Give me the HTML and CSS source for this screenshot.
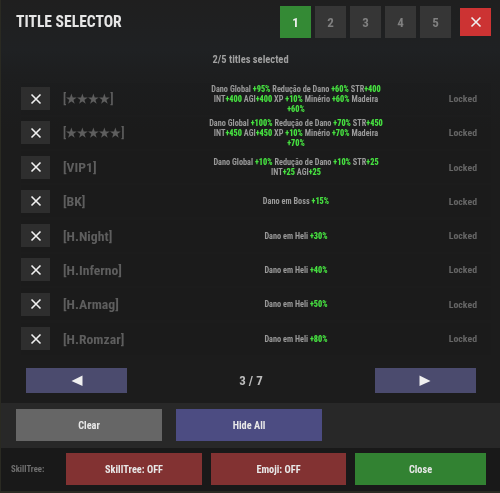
FILE: index.html
```html
<!DOCTYPE html>
<html lang="pt">
  <head>
    <meta charset="UTF-8" />
    <title>Title Selector</title>
    <link rel="stylesheet" href="styles.css">
  </head>
  <body>
    <div class="panel">
      <header class="top">
        <h1>TITLE SELECTOR</h1>
        <nav class="tabs">
          <span class="tab active">1</span>
          <span class="tab">2</span>
          <span class="tab">3</span>
          <span class="tab">4</span>
          <span class="tab">5</span>
        </nav>
        <span class="close-x">
          <svg viewBox="0 0 12 12" width="12" height="12"><path d="M1.5 1.5 10.5 10.5M10.5 1.5 1.5 10.5" /></svg>
        </span>
      </header>

      <p class="count">2/5 titles selected</p>

      <section class="rows">
        <div class="row">
          <span class="check"><svg viewBox="0 0 12 12" width="12" height="12"><path d="M1.5 1.5 10.5 10.5M10.5 1.5 1.5 10.5" /></svg></span>
          <span class="name stars">[★★★★]</span>
          <p class="bonus">Dano Global <b>+95%</b> Redução de Dano <b>+60%</b> STR<b>+400</b> INT<b>+400</b> AGI<b>+400</b> XP <b>+10%</b> Minério <b>+60%</b> Madeira <b>+60%</b></p>
          <span class="state">Locked</span>
        </div>
        <div class="row">
          <span class="check"><svg viewBox="0 0 12 12" width="12" height="12"><path d="M1.5 1.5 10.5 10.5M10.5 1.5 1.5 10.5" /></svg></span>
          <span class="name stars">[★★★★★]</span>
          <p class="bonus">Dano Global <b>+100%</b> Redução de Dano <b>+70%</b> STR<b>+450</b> INT<b>+450</b> AGI<b>+450</b> XP <b>+10%</b> Minério <b>+70%</b> Madeira <b>+70%</b></p>
          <span class="state">Locked</span>
        </div>
        <div class="row">
          <span class="check"><svg viewBox="0 0 12 12" width="12" height="12"><path d="M1.5 1.5 10.5 10.5M10.5 1.5 1.5 10.5" /></svg></span>
          <span class="name">[VIP1]</span>
          <p class="bonus">Dano Global <b>+10%</b> Redução de Dano <b>+10%</b> STR<b>+25</b> INT<b>+25</b> AGI<b>+25</b></p>
          <span class="state">Locked</span>
        </div>
        <div class="row">
          <span class="check"><svg viewBox="0 0 12 12" width="12" height="12"><path d="M1.5 1.5 10.5 10.5M10.5 1.5 1.5 10.5" /></svg></span>
          <span class="name">[BK]</span>
          <p class="bonus">Dano em Boss <b>+15%</b></p>
          <span class="state">Locked</span>
        </div>
        <div class="row">
          <span class="check"><svg viewBox="0 0 12 12" width="12" height="12"><path d="M1.5 1.5 10.5 10.5M10.5 1.5 1.5 10.5" /></svg></span>
          <span class="name">[H.Night]</span>
          <p class="bonus">Dano em Heli <b>+30%</b></p>
          <span class="state">Locked</span>
        </div>
        <div class="row">
          <span class="check"><svg viewBox="0 0 12 12" width="12" height="12"><path d="M1.5 1.5 10.5 10.5M10.5 1.5 1.5 10.5" /></svg></span>
          <span class="name">[H.Inferno]</span>
          <p class="bonus">Dano em Heli <b>+40%</b></p>
          <span class="state">Locked</span>
        </div>
        <div class="row">
          <span class="check"><svg viewBox="0 0 12 12" width="12" height="12"><path d="M1.5 1.5 10.5 10.5M10.5 1.5 1.5 10.5" /></svg></span>
          <span class="name">[H.Armag]</span>
          <p class="bonus">Dano em Heli <b>+50%</b></p>
          <span class="state">Locked</span>
        </div>
        <div class="row">
          <span class="check"><svg viewBox="0 0 12 12" width="12" height="12"><path d="M1.5 1.5 10.5 10.5M10.5 1.5 1.5 10.5" /></svg></span>
          <span class="name">[H.Romzar]</span>
          <p class="bonus">Dano em Heli <b>+80%</b></p>
          <span class="state">Locked</span>
        </div>
      </section>

      <div class="pager">
        <span class="page-btn"><svg viewBox="0 0 12 12" width="12" height="12"><path d="M11.5 0.5V11L0.5 6Z" /></svg></span>
        <span class="page-num">3 / 7</span>
        <span class="page-btn"><svg viewBox="0 0 12 12" width="12" height="12"><path d="M0.5 0.5V11L11.5 6Z" /></svg></span>
      </div>

      <div class="actions">
        <span class="btn btn-grey">Clear</span>
        <span class="btn btn-blue">Hide All</span>
      </div>

      <footer class="bottom">
        <span class="bottom-label">SkillTree:</span>
        <span class="btn btn-red skill">SkillTree: OFF</span>
        <span class="btn btn-red emoji">Emoji: OFF</span>
        <span class="btn btn-green closer">Close</span>
      </footer>
    </div>
  </body>
</html>
```

FILE: styles.css
```css
* {
  margin: 0;
  padding: 0;
  box-sizing: border-box;
}

body {
  width: 500px;
  height: 493px;
  overflow: hidden;
  background-color: #2a2a22;
  font-family: "Roboto", "Liberation Sans", sans-serif;
  font-weight: 700;
  font-stretch: 75%;
}

.panel {
  width: 499px;
  height: 491px;
  margin-left: 1px;
  background: linear-gradient(180deg, #1f1f1f 0, #1f2123 50px, #1d1e1f 75px, #1c1c1c 130px);
  filter: blur(0.4px); /* исходник немного размыт */
}

/* Шапка */
.top {
  height: 45px;
  display: flex;
  align-items: flex-start;
  padding: 6px 9px 0 15px;
}

.top h1 {
  font-size: 15.6px;
  line-height: 32px;
  color: #e6e6e6;
  flex-grow: 1;
}

.tabs {
  display: flex;
  gap: 4px;
  margin-right: 9px;
}

.tab {
  width: 31px;
  height: 32px;
  display: flex;
  align-items: center;
  justify-content: center;
  font-size: 13px;
  color: #808080;
  background-color: #363636;
}

.tab.active {
  color: #eeeeee;
  background-color: #348a35;
}

.close-x {
  width: 31px;
  height: 28px;
  margin-top: 2px;
  display: flex;
  align-items: center;
  justify-content: center;
  background-color: #cc3333;
}

svg path {
  fill: none;
  stroke: #f0f0f0;
  stroke-width: 1.6;
}

.count {
  height: 30px;
  padding-top: 8px;
  font-size: 10.5px;
  line-height: 14px;
  text-align: center;
  color: #a0a0a0;
}

/* Список титулов */
.rows {
  padding: 7.5px 9px 0 20px;
  height: 291px;
  display: grid;
  grid-auto-rows: 32px;
  row-gap: 2.3px;
}

.row {
  display: grid;
  grid-template-columns: 29px 158px 176px 1fr;
  align-items: center;
  background-color: rgba(0, 0, 0, 0.03);
}

.check {
  height: 23px;
  display: flex;
  align-items: center;
  justify-content: center;
  background-color: #2e2e2e;
}

.name {
  margin-left: 13px;
  font-size: 13.7px;
  color: #5e5e5e;
  white-space: nowrap;
}

.name.stars {
  font-size: 12.3px;
}

.bonus {
  font-size: 8.25px;
  line-height: 10px;
  text-align: center;
  color: #9a9a9a;
}

.bonus b {
  color: #46e040;
}

.state {
  font-size: 9.8px;
  color: #666666;
  justify-self: end;
  margin-right: 14px;
}

/* Пагинация */
.pager {
  height: 37px;
  padding: 2px 24px 0 25px;
  display: flex;
  justify-content: space-between;
  align-items: flex-start;
}

.page-btn {
  width: 101px;
  height: 25px;
  display: flex;
  align-items: center;
  justify-content: center;
  background-color: #4b4b6e;
}

.page-btn path {
  fill: #f0f0f0;
  stroke: none;
}

.page-num {
  font-size: 13px;
  line-height: 25px;
  color: #bcbcbc;
}

/* Кнопки */
.actions {
  height: 45px;
  display: flex;
  gap: 14px;
  padding: 6px 0 0 15px;
  background-color: #282828;
}

.btn {
  display: flex;
  align-items: center;
  justify-content: center;
  height: 32px;
  font-size: 10.3px;
  color: #e8e8e8;
}

.actions .btn {
  width: 146px;
}

.btn-grey {
  background-color: #666666;
}

.btn-blue {
  background-color: #4c4c82;
}

.btn-red {
  background-color: #823232;
}

.btn-green {
  background-color: #328232;
}

.bottom {
  height: 43px;
  display: flex;
  align-items: flex-start;
  padding: 5px 0 0 10px;
  background-color: #191919;
}

.bottom-label {
  width: 55px;
  font-size: 8.7px;
  line-height: 32px;
  color: #707070;
}

.skill {
  width: 136px;
  margin-right: 9px;
}

.emoji {
  width: 135px;
  margin-right: 9px;
}

.closer {
  width: 131px;
}
```
